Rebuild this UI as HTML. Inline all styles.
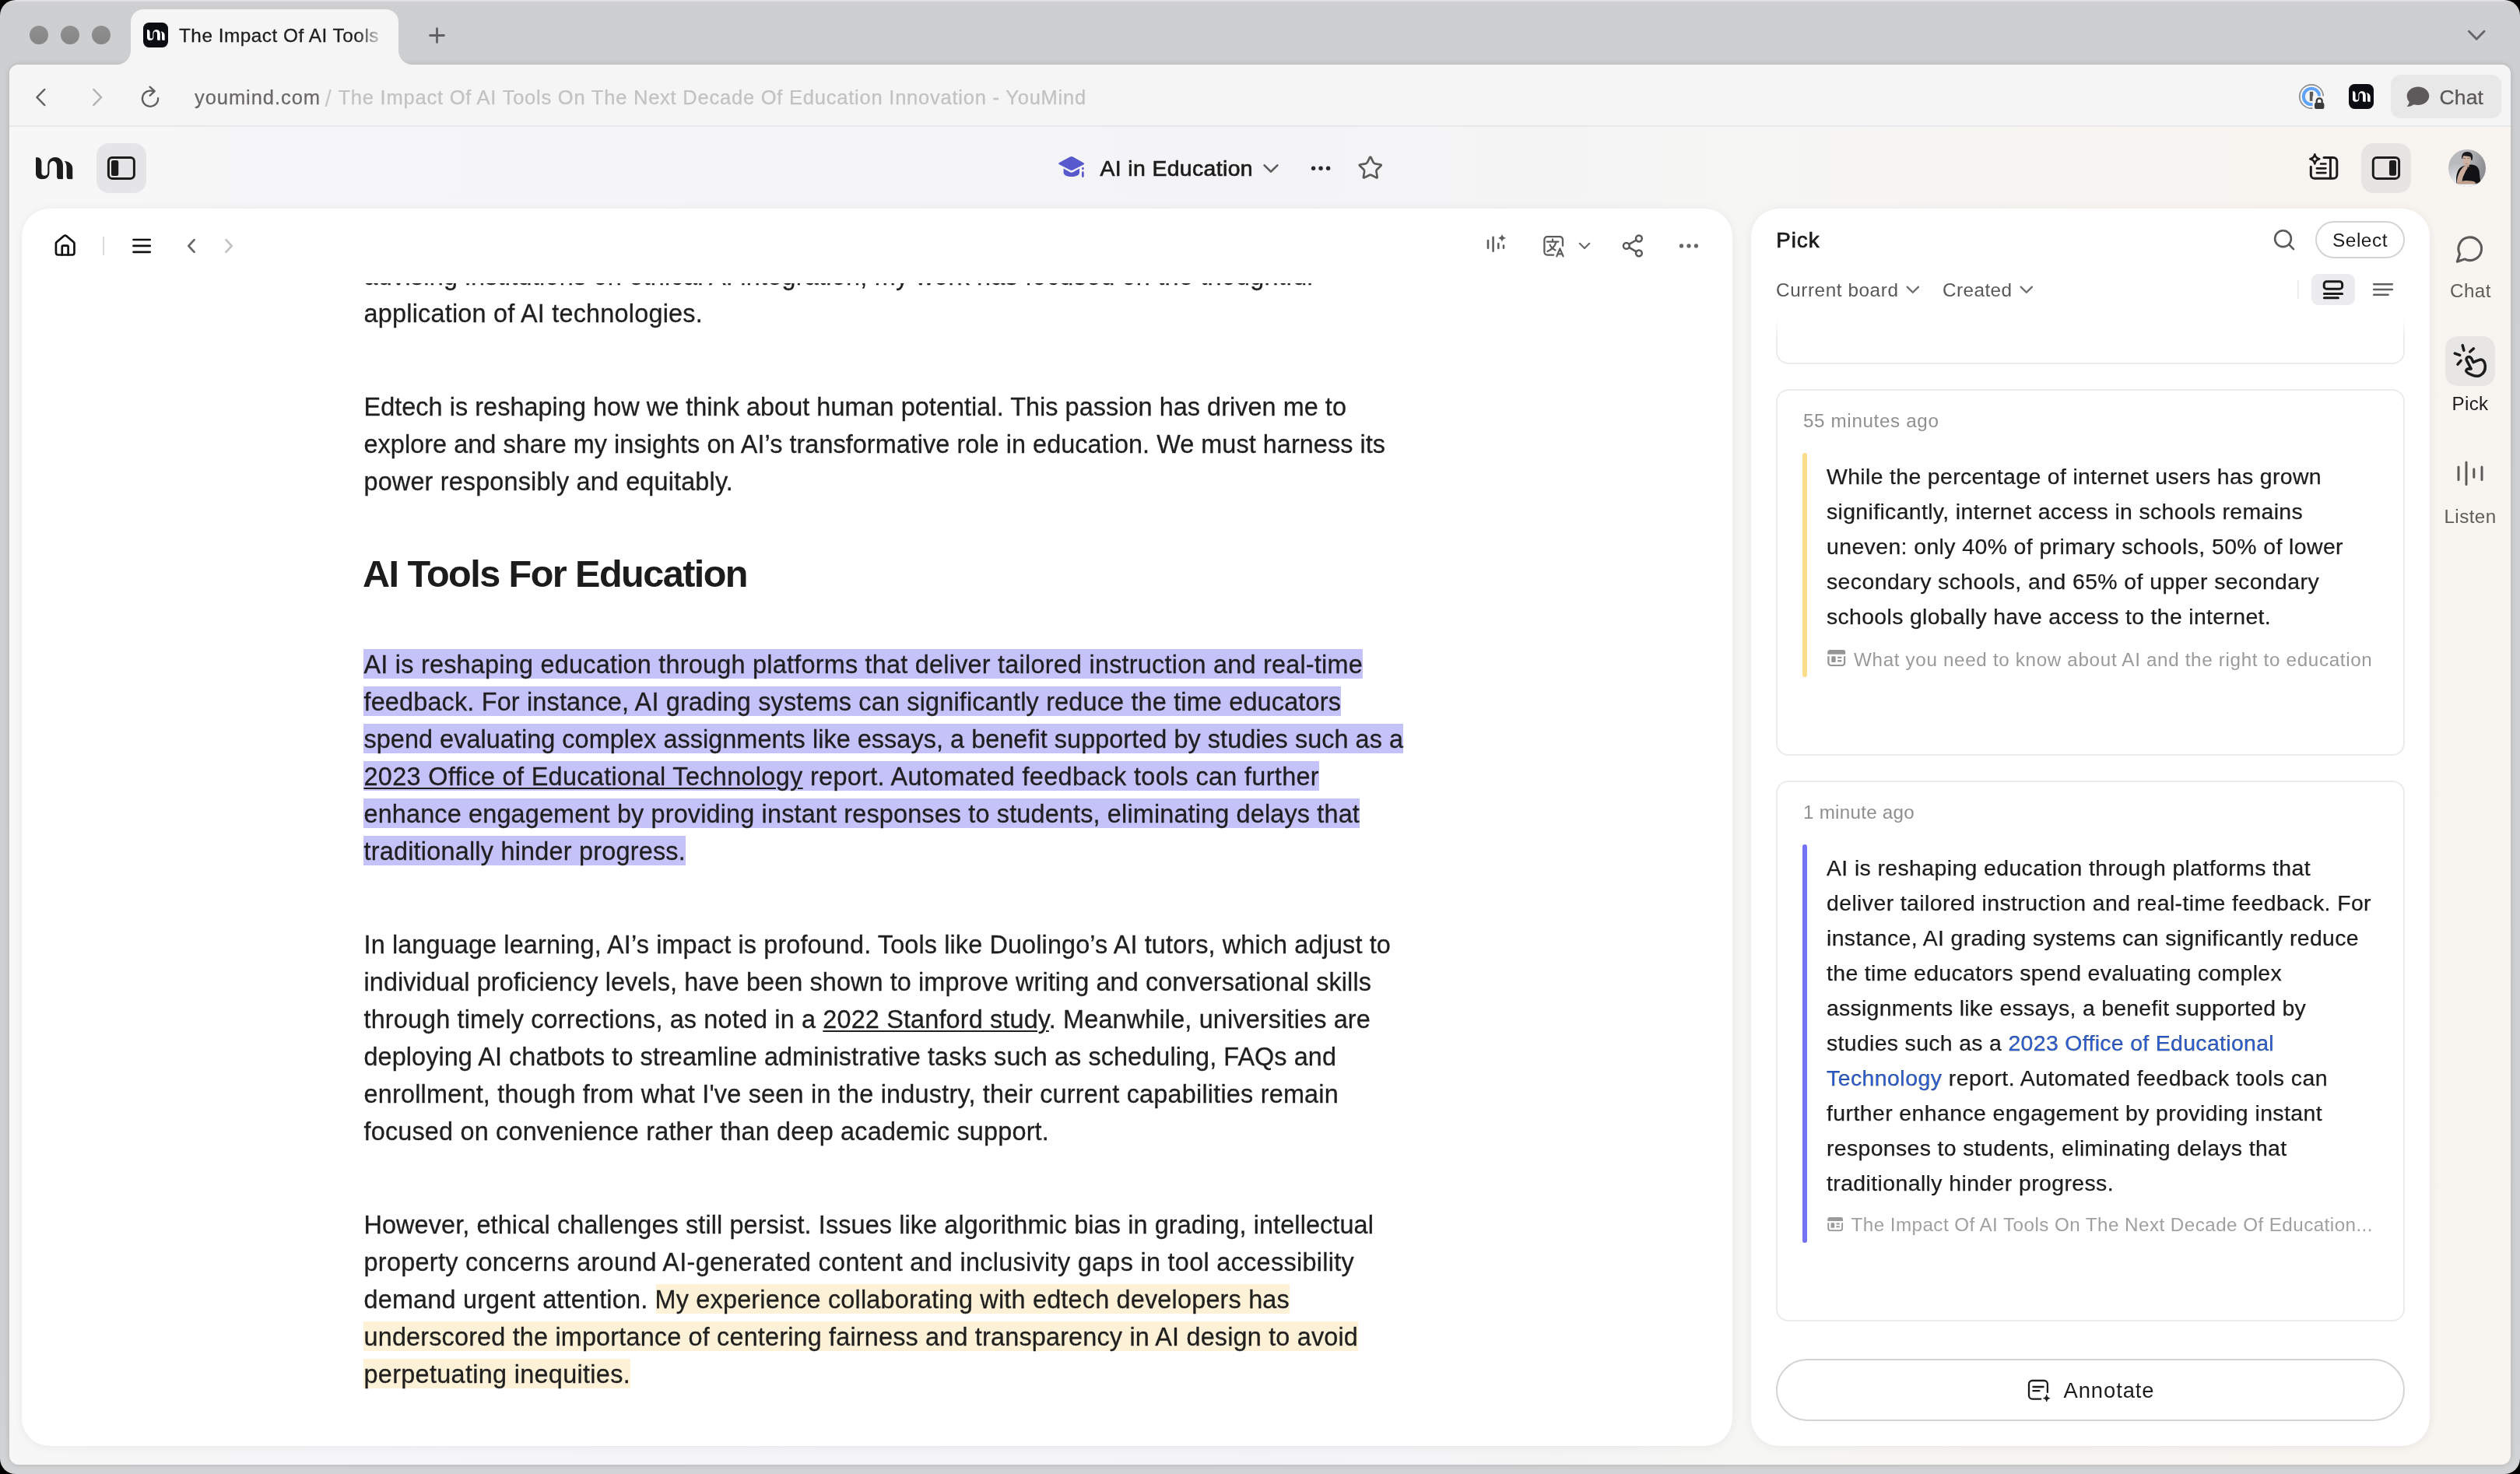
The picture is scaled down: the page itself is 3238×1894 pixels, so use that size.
<!DOCTYPE html>
<html lang="en"><head><meta charset="utf-8"><title>The Impact Of AI Tools On The Next Decade Of Education Innovation - YouMind</title>
<style>
*{box-sizing:border-box;margin:0;padding:0}
html,body{width:3238px;height:1894px;overflow:hidden;background:#000;font-family:"Liberation Sans",sans-serif}
.abs,.t,svg.i{position:absolute}
.t{white-space:nowrap;font-kerning:normal}
svg.i{overflow:visible}
.win{will-change:transform;position:absolute;left:0;top:0;width:3238px;height:1894px;border-radius:20px;overflow:hidden;
 background:linear-gradient(180deg,#e6e6e7 0,#dfdfe0 1.2px,#d0d1d3 2.6px,#cdced0 7px,#cecfd1 50px,#cfd0d2 94%,#d2d3d4 100%)}
.tl{position:absolute;top:33px;width:24px;height:24px;border-radius:50%;background:linear-gradient(180deg,#8f8f90,#868687)}
.tab{position:absolute;left:168px;top:12px;width:344px;height:72px;background:#f5f5f5;border-radius:16px 16px 0 0}
.flare{position:absolute;top:65px;width:18px;height:18px}
.inner{position:absolute;left:12px;top:83px;width:3214px;height:1799px;border-radius:12px;overflow:hidden;
 box-shadow:0 0 7px 0 rgba(0,0,0,.15);
 background:linear-gradient(90deg,#f7f7f8 0%,#f6f6f8 12%,#f5f4f7 30%,#f4f3f6 50%,#f5f4f5 62%,#f6f6f4 69%,#f7f4f1 85%,#f8f4f0 100%)}
.tbar{position:absolute;left:0;top:0;width:3214px;height:80px;background:#f5f5f5;border-bottom:2px solid #e9e9eb}
.card{position:absolute;background:#fff;border-radius:36px;box-shadow:0 0 14px rgba(0,0,0,.045),0 4px 14px rgba(40,40,60,.025)}
.hl{position:absolute;height:38px}
.hp{background:#c4c2f9}
.hy{background:#fdf2d7}
.pc{position:absolute;left:2282px;width:808px;border:2px solid #ebebee;border-radius:16px;background:#fff}
.bar{position:absolute;left:2316px;width:6px;border-radius:3px}
.clipA{position:absolute;left:0;top:0;width:3238px;height:1894px;clip-path:inset(364px 1012px 36px 28px)}
.clipP{position:absolute;left:0;top:0;width:3238px;height:1894px;clip-path:inset(403px 116px 36px 2250px)}
</style></head>
<body>
<div class="win">
  <div class="tl" style="left:38px"></div><div class="tl" style="left:78px"></div><div class="tl" style="left:118px"></div>
  <div class="inner">
    <div class="tbar"></div>
  </div>
  <div class="tab"></div>
  <div class="flare" style="left:150px;background:radial-gradient(circle at 0 0,rgba(245,245,245,0) 17.5px,#f5f5f5 18.5px)"></div>
  <div class="flare" style="left:512px;background:radial-gradient(circle at 100% 0,rgba(245,245,245,0) 17.5px,#f5f5f5 18.5px)"></div>
  <svg width="0" height="0" style="position:absolute"><defs>
<symbol id="um" viewBox="0 0 663 395"><path d="M0,3 L40,3 C80,10 103,45 103,95 L103,280 C103,315 125,330 155,330 C190,330 213,310 213,270 L213,140 C213,60 270,0 350,0 C430,0 488,60 488,150 L488,395 L430,395 C395,395 378,375 378,340 L378,160 C378,105 350,70 310,70 C270,70 243,105 243,160 L243,280 C243,350 190,395 120,395 C50,395 0,360 0,290 Z"/><path d="M508,70 C600,70 663,130 663,220 L663,395 L605,395 C570,395 553,375 553,340 L553,190 C553,130 540,95 508,70 Z"/></symbol>
<symbol id="src" viewBox="0 0 24 22"><path d="M0,6 V3.5 A3.5,3.5 0 0 1 3.5,0 H20.5 A3.5,3.5 0 0 1 24,3.5 V6 Z" fill="currentColor"/><path d="M1.2,8.6 V17.3 A3.5,3.5 0 0 0 4.7,20.8 H19.3 A3.5,3.5 0 0 0 22.8,17.3 V8.6" fill="none" stroke="currentColor" stroke-width="2.4"/><rect x="5.2" y="8.6" width="5.6" height="8" rx="0.8" fill="currentColor"/><path d="M14.4,10.2 H17.8 M14.4,14.8 H17.8" stroke="currentColor" stroke-width="2.4" stroke-linecap="round"/></symbol>
</defs></svg>
<!-- favicon -->
<div class="abs" style="left:184px;top:29px;width:32px;height:32px;border-radius:7.5px;background:#0c0d13"></div>
<svg class="i" style="left:188.6px;top:38px" width="22.8" height="14" fill="#fff"><use href="#um" width="22.8" height="14"/></svg>
<!-- plus -->
<svg class="i" style="left:545px;top:29px" width="32" height="32" viewBox="0 0 32 32" fill="none" stroke="#5f5f61" stroke-width="2.8" stroke-linecap="round"><path d="M7.6,16.5 H25.4 M16.5,7.6 V25.4"/></svg>
<!-- tabs chevron -->
<svg class="i" style="left:3166px;top:33px" width="32" height="24" viewBox="0 0 32 24" fill="none" stroke="#66666a" stroke-width="2.9" stroke-linecap="round" stroke-linejoin="round"><path d="M6.4,7.3 L16.2,17.3 L26,7.3"/></svg>

  <!-- cards -->
  <div class="card" style="left:28px;top:268px;width:2198px;height:1590px"></div>
  <div class="card" style="left:2250px;top:268px;width:872px;height:1590px"></div>

  <!-- header buttons -->
  <div class="abs" style="left:124px;top:184px;width:64px;height:64px;border-radius:16px;background:#e5e5e7"></div>
  <div class="abs" style="left:3034px;top:184px;width:64px;height:64px;border-radius:16px;background:#e7e4e3"></div>
  <div class="abs" style="left:3072px;top:96px;width:142px;height:56px;border-radius:13px;background:#e9e8e9"></div>
  <div class="abs" style="left:3142px;top:432px;width:64px;height:64px;border-radius:16px;background:#e8e6e5"></div>
  <!-- pick header -->
  <div class="abs" style="left:2975px;top:284px;width:115px;height:48px;border-radius:24px;border:2px solid #d3d4d8"></div>
  <div class="abs" style="left:2970px;top:352px;width:56px;height:40px;border-radius:9px;background:#ececee"></div>
  <div class="abs" style="left:2952px;top:360px;width:2px;height:24px;background:#ebebee"></div>
  <div class="abs" style="left:132px;top:304px;width:2px;height:24px;background:#dddde0"></div>

  <!-- article -->
  <div class="clipA">
    <div class="hl hp" style="left:467px;top:834px;width:1284px"></div>
    <div class="hl hp" style="left:467px;top:882px;width:1256px"></div>
    <div class="hl hp" style="left:467px;top:930px;width:1336px"></div>
    <div class="hl hp" style="left:467px;top:978px;width:1228px"></div>
    <div class="hl hp" style="left:467px;top:1026px;width:1280px"></div>
    <div class="hl hp" style="left:467px;top:1074px;width:414px"></div>
    <div class="hl hy" style="left:843px;top:1650px;width:814px"></div>
    <div class="hl hy" style="left:467px;top:1698px;width:1278px"></div>
    <div class="hl hy" style="left:467px;top:1746px;width:343px"></div>
<div class="t" style="left:467.50px;top:330.61px;font-size:32.4px;line-height:49px;color:#1f1f1f;letter-spacing:0.236px;-webkit-text-stroke:0.3px #1f1f1f;">advising institutions on ethical AI integration, my work has focused on the thoughtful</div>
<div class="t" style="left:467.50px;top:378.61px;font-size:32.4px;line-height:49px;color:#1f1f1f;letter-spacing:0.223px;-webkit-text-stroke:0.3px #1f1f1f;">application of AI technologies.</div>
<div class="t" style="left:467.50px;top:498.92px;font-size:32.4px;line-height:49px;color:#1f1f1f;letter-spacing:0.053px;-webkit-text-stroke:0.3px #1f1f1f;">Edtech is reshaping how we think about human potential. This passion has driven me to</div>
<div class="t" style="left:467.50px;top:546.92px;font-size:32.4px;line-height:49px;color:#1f1f1f;letter-spacing:0.053px;-webkit-text-stroke:0.3px #1f1f1f;">explore and share my insights on AI’s transformative role in education. We must harness its</div>
<div class="t" style="left:467.50px;top:594.92px;font-size:32.4px;line-height:49px;color:#1f1f1f;letter-spacing:0.161px;-webkit-text-stroke:0.3px #1f1f1f;">power responsibly and equitably.</div>
<div class="t" style="left:466.00px;top:701.00px;font-size:48.6px;line-height:73px;color:#1c1c1c;font-weight:700;letter-spacing:-1.556px;">AI Tools For Education</div>
<div class="t" style="left:467.50px;top:830.01px;font-size:32.4px;line-height:49px;color:#1f1f1f;letter-spacing:0.235px;-webkit-text-stroke:0.3px #1f1f1f;">AI is reshaping education through platforms that deliver tailored instruction and real-time</div>
<div class="t" style="left:467.50px;top:878.01px;font-size:32.4px;line-height:49px;color:#1f1f1f;letter-spacing:0.175px;-webkit-text-stroke:0.3px #1f1f1f;">feedback. For instance, AI grading systems can significantly reduce the time educators</div>
<div class="t" style="left:467.50px;top:926.01px;font-size:32.4px;line-height:49px;color:#1f1f1f;letter-spacing:0.055px;-webkit-text-stroke:0.3px #1f1f1f;">spend evaluating complex assignments like essays, a benefit supported by studies such as a</div>
<div class="t" style="left:467.50px;top:974.01px;font-size:32.4px;line-height:49px;color:#1f1f1f;letter-spacing:0.337px;-webkit-text-stroke:0.3px #1f1f1f;"><span style="text-decoration:underline;text-decoration-thickness:2.4px;text-underline-offset:2.6px;text-decoration-skip-ink:auto;">2023 Office of Educational Technology</span> report. Automated feedback tools can further</div>
<div class="t" style="left:467.50px;top:1022.01px;font-size:32.4px;line-height:49px;color:#1f1f1f;letter-spacing:0.159px;-webkit-text-stroke:0.3px #1f1f1f;">enhance engagement by providing instant responses to students, eliminating delays that</div>
<div class="t" style="left:467.50px;top:1070.01px;font-size:32.4px;line-height:49px;color:#1f1f1f;letter-spacing:0.220px;-webkit-text-stroke:0.3px #1f1f1f;">traditionally hinder progress.</div>
<div class="t" style="left:467.50px;top:1190.01px;font-size:32.4px;line-height:49px;color:#1f1f1f;letter-spacing:0.129px;-webkit-text-stroke:0.3px #1f1f1f;">In language learning, AI’s impact is profound. Tools like Duolingo’s AI tutors, which adjust to</div>
<div class="t" style="left:467.50px;top:1238.01px;font-size:32.4px;line-height:49px;color:#1f1f1f;letter-spacing:0.099px;-webkit-text-stroke:0.3px #1f1f1f;">individual proficiency levels, have been shown to improve writing and conversational skills</div>
<div class="t" style="left:467.50px;top:1286.01px;font-size:32.4px;line-height:49px;color:#1f1f1f;letter-spacing:0.155px;-webkit-text-stroke:0.3px #1f1f1f;">through timely corrections, as noted in a <span style="text-decoration:underline;text-decoration-thickness:2.4px;text-underline-offset:2.6px;text-decoration-skip-ink:auto;">2022 Stanford study</span>. Meanwhile, universities are</div>
<div class="t" style="left:467.50px;top:1334.01px;font-size:32.4px;line-height:49px;color:#1f1f1f;letter-spacing:0.085px;-webkit-text-stroke:0.3px #1f1f1f;">deploying AI chatbots to streamline administrative tasks such as scheduling, FAQs and</div>
<div class="t" style="left:467.50px;top:1382.01px;font-size:32.4px;line-height:49px;color:#1f1f1f;letter-spacing:0.214px;-webkit-text-stroke:0.3px #1f1f1f;">enrollment, though from what I've seen in the industry, their current capabilities remain</div>
<div class="t" style="left:467.50px;top:1430.01px;font-size:32.4px;line-height:49px;color:#1f1f1f;letter-spacing:0.189px;-webkit-text-stroke:0.3px #1f1f1f;">focused on convenience rather than deep academic support.</div>
<div class="t" style="left:467.50px;top:1550.01px;font-size:32.4px;line-height:49px;color:#1f1f1f;letter-spacing:0.107px;-webkit-text-stroke:0.3px #1f1f1f;">However, ethical challenges still persist. Issues like algorithmic bias in grading, intellectual</div>
<div class="t" style="left:467.50px;top:1598.01px;font-size:32.4px;line-height:49px;color:#1f1f1f;letter-spacing:0.302px;-webkit-text-stroke:0.3px #1f1f1f;">property concerns around AI-generated content and inclusivity gaps in tool accessibility</div>
<div class="t" style="left:467.50px;top:1646.01px;font-size:32.4px;line-height:49px;color:#1f1f1f;letter-spacing:0.196px;-webkit-text-stroke:0.3px #1f1f1f;">demand urgent attention. My experience collaborating with edtech developers has</div>
<div class="t" style="left:467.50px;top:1694.01px;font-size:32.4px;line-height:49px;color:#1f1f1f;letter-spacing:0.176px;-webkit-text-stroke:0.3px #1f1f1f;">underscored the importance of centering fairness and transparency in AI design to avoid</div>
<div class="t" style="left:467.50px;top:1742.01px;font-size:32.4px;line-height:49px;color:#1f1f1f;letter-spacing:0.314px;-webkit-text-stroke:0.3px #1f1f1f;">perpetuating inequities.</div>
  </div>

  <!-- pick list -->
  <div class="clipP">
    <div class="pc" style="top:300px;height:168px"></div>
    <div class="abs" style="left:2270px;top:403px;width:840px;height:32px;background:linear-gradient(180deg,#fff 0,rgba(255,255,255,.9) 30%,rgba(255,255,255,0) 100%)"></div>
    <div class="pc" style="top:500px;height:471px"></div>
    <div class="pc" style="top:1003px;height:695px"></div>
    <div class="bar" style="top:582px;height:288px;background:#fbdc8a"></div>
    <div class="bar" style="top:1085px;height:512px;background:#7571f3"></div>
<div class="t" style="left:2317.00px;top:522.81px;font-size:24.2px;line-height:36px;color:#8f8f8f;letter-spacing:0.650px;">55 minutes ago</div>
<div class="t" style="left:2347.00px;top:590.91px;font-size:28.4px;line-height:43px;color:#1c1c1c;letter-spacing:0.362px;-webkit-text-stroke:0.25px #1c1c1c;">While the percentage of internet users has grown</div>
<div class="t" style="left:2347.00px;top:635.91px;font-size:28.4px;line-height:43px;color:#1c1c1c;letter-spacing:0.360px;-webkit-text-stroke:0.25px #1c1c1c;">significantly, internet access in schools remains</div>
<div class="t" style="left:2347.00px;top:680.91px;font-size:28.4px;line-height:43px;color:#1c1c1c;letter-spacing:0.411px;-webkit-text-stroke:0.25px #1c1c1c;">uneven: only 40% of primary schools, 50% of lower</div>
<div class="t" style="left:2347.00px;top:725.91px;font-size:28.4px;line-height:43px;color:#1c1c1c;letter-spacing:0.424px;-webkit-text-stroke:0.25px #1c1c1c;">secondary schools, and 65% of upper secondary</div>
<div class="t" style="left:2347.00px;top:770.91px;font-size:28.4px;line-height:43px;color:#1c1c1c;letter-spacing:0.344px;-webkit-text-stroke:0.25px #1c1c1c;">schools globally have access to the internet.</div>
<div class="t" style="left:2382.00px;top:829.51px;font-size:24.2px;line-height:36px;color:#9a9a9a;letter-spacing:0.676px;">What you need to know about AI and the right to education</div>
<div class="t" style="left:2317.00px;top:1025.81px;font-size:24.2px;line-height:36px;color:#8f8f8f;letter-spacing:0.262px;">1 minute ago</div>
<div class="t" style="left:2347.00px;top:1093.70px;font-size:28.4px;line-height:43px;color:#1c1c1c;letter-spacing:0.398px;-webkit-text-stroke:0.25px #1c1c1c;">AI is reshaping education through platforms that</div>
<div class="t" style="left:2347.00px;top:1138.70px;font-size:28.4px;line-height:43px;color:#1c1c1c;letter-spacing:0.411px;-webkit-text-stroke:0.25px #1c1c1c;">deliver tailored instruction and real-time feedback. For</div>
<div class="t" style="left:2347.00px;top:1183.70px;font-size:28.4px;line-height:43px;color:#1c1c1c;letter-spacing:0.370px;-webkit-text-stroke:0.25px #1c1c1c;">instance, AI grading systems can significantly reduce</div>
<div class="t" style="left:2347.00px;top:1228.70px;font-size:28.4px;line-height:43px;color:#1c1c1c;letter-spacing:0.355px;-webkit-text-stroke:0.25px #1c1c1c;">the time educators spend evaluating complex</div>
<div class="t" style="left:2347.00px;top:1273.70px;font-size:28.4px;line-height:43px;color:#1c1c1c;letter-spacing:0.280px;-webkit-text-stroke:0.25px #1c1c1c;">assignments like essays, a benefit supported by</div>
<div class="t" style="left:2347.00px;top:1318.70px;font-size:28.4px;line-height:43px;color:#1c1c1c;letter-spacing:0.346px;-webkit-text-stroke:0.25px #1c1c1c;">studies such as a <span style="color:#2a5fd7;">2023 Office of Educational</span></div>
<div class="t" style="left:2347.00px;top:1363.70px;font-size:28.4px;line-height:43px;color:#1c1c1c;letter-spacing:0.471px;-webkit-text-stroke:0.25px #1c1c1c;"><span style="color:#2a5fd7;">Technology</span> report. Automated feedback tools can</div>
<div class="t" style="left:2347.00px;top:1408.70px;font-size:28.4px;line-height:43px;color:#1c1c1c;letter-spacing:0.423px;-webkit-text-stroke:0.25px #1c1c1c;">further enhance engagement by providing instant</div>
<div class="t" style="left:2347.00px;top:1453.70px;font-size:28.4px;line-height:43px;color:#1c1c1c;letter-spacing:0.371px;-webkit-text-stroke:0.25px #1c1c1c;">responses to students, eliminating delays that</div>
<div class="t" style="left:2347.00px;top:1498.70px;font-size:28.4px;line-height:43px;color:#1c1c1c;letter-spacing:0.411px;-webkit-text-stroke:0.25px #1c1c1c;">traditionally hinder progress.</div>
<div class="t" style="left:2378.50px;top:1556.01px;font-size:24.2px;line-height:36px;color:#a0a0a0;letter-spacing:0.457px;">The Impact Of AI Tools On The Next Decade Of Education...</div>
    <svg class="i" style="left:2348.1px;top:835.3px;color:#969696" width="23.6" height="21.2"><use href="#src" width="23.6" height="21.2"/></svg>
<svg class="i" style="left:2348.1px;top:1563.8px;color:#9a9a9a" width="20.4" height="18.3"><use href="#src" width="20.4" height="18.3"/></svg>

  </div>
  <div class="abs" style="left:2282px;top:1746px;width:808px;height:80px;border-radius:40px;border:2px solid #d3d4d8;background:#fff"></div>

<div class="t" style="left:230.00px;top:28.31px;font-size:24.3px;line-height:36px;color:#1d1d1f;letter-spacing:0.530px;-webkit-text-stroke:0.3px #1d1d1f;-webkit-mask-image:linear-gradient(90deg,#000 0,#000 228px,rgba(0,0,0,.25) 256px);mask-image:linear-gradient(90deg,#000 0,#000 228px,rgba(0,0,0,.25) 256px);">The Impact Of AI Tools</div>
<div class="t" style="left:250.00px;top:106.01px;font-size:25.5px;line-height:38px;color:#6b6768;letter-spacing:0.940px;-webkit-text-stroke:0.25px #6b6768;">youmind.com</div>
<div class="t" style="left:417.50px;top:103.50px;font-size:30px;line-height:45px;color:#c8c6c7;">/</div>
<div class="t" style="left:434.50px;top:106.01px;font-size:25.5px;line-height:38px;color:#c3c1c2;letter-spacing:0.774px;-webkit-text-stroke:0.25px #c3c1c2;">The Impact Of AI Tools On The Next Decade Of Education Innovation - YouMind</div>
<div class="t" style="left:3134.50px;top:104.70px;font-size:26.5px;line-height:40px;color:#5a5658;letter-spacing:0.129px;-webkit-text-stroke:0.25px #5a5658;">Chat</div>
<div class="t" style="left:1413.50px;top:194.50px;font-size:28.4px;line-height:43px;color:#1c1c1c;letter-spacing:0.368px;-webkit-text-stroke:0.7px #1c1c1c;">AI in Education</div>
<div class="t" style="left:2282.30px;top:287.81px;font-size:27.8px;line-height:42px;color:#1c1c1c;letter-spacing:0.921px;-webkit-text-stroke:0.7px #1c1c1c;">Pick</div>
<div class="t" style="left:2282.00px;top:355.00px;font-size:24.3px;line-height:36px;color:#585858;letter-spacing:0.583px;">Current board</div>
<div class="t" style="left:2496.00px;top:355.00px;font-size:24.3px;line-height:36px;color:#585858;letter-spacing:0.435px;">Created</div>
<div class="t" style="left:2997.00px;top:289.60px;font-size:24.4px;line-height:37px;color:#1c1c1c;letter-spacing:0.534px;">Select</div>
<div class="t" style="left:3148.00px;top:356.41px;font-size:24.2px;line-height:36px;color:#5e5b59;letter-spacing:0.477px;">Chat</div>
<div class="t" style="left:3150.50px;top:501.01px;font-size:24.2px;line-height:36px;color:#1c1c1c;letter-spacing:0.324px;">Pick</div>
<div class="t" style="left:3140.50px;top:645.51px;font-size:24.2px;line-height:36px;color:#5e5b59;letter-spacing:0.409px;">Listen</div>
<div class="t" style="left:2651.50px;top:1765.60px;font-size:27.4px;line-height:41px;color:#1c1c1c;letter-spacing:0.918px;">Annotate</div>
  <!-- nav -->
<svg class="i" style="left:36px;top:105px" width="180" height="44" viewBox="36 105 180 44" fill="none" stroke-width="2.5" stroke-linecap="round" stroke-linejoin="round">
<path d="M57.2,115 L47.4,125 L57.2,135" stroke="#5f5d5f"/>
<path d="M120.3,115 L130.1,125 L120.3,135" stroke="#b2b0b2"/>
<path d="M203.1,126.2 A10.1,10.1 0 1 1 197.6,117.7" stroke="#5f5d5f" stroke-width="2.3"/>
<path d="M192.6,111.6 L198.7,117.2 L192.6,122.8" stroke="#5f5d5f" stroke-width="2.3"/>
</svg>
<!-- 1password -->
<svg class="i" style="left:2952px;top:106px" width="40" height="40" viewBox="2952 106 40 40" fill="none">
<circle cx="2970" cy="124" r="15.2" stroke="#8c8c8c" stroke-width="1.7"/>
<circle cx="2970" cy="124" r="10.2" stroke="#5ea3f9" stroke-width="4"/>
<rect x="2967.8" y="117.8" width="4.4" height="12" fill="#5a5a5a"/>
<rect x="2971.5" y="123.5" width="18" height="19" fill="#f5f5f5"/>
<path d="M2976.7,133 V129.8 A3.5,3.5 0 0 1 2983.7,129.8 V133" stroke="#3b3b3b" stroke-width="2.3"/>
<rect x="2974" y="132" width="12.4" height="8" rx="2" fill="#3b3b3b"/>
</svg>
<!-- ext icon -->
<div class="abs" style="left:3018px;top:108px;width:32px;height:32px;border-radius:7.5px;background:#0c0d13"></div>
<svg class="i" style="left:3022.6px;top:117px" width="22.8" height="14" fill="#fff"><use href="#um" width="22.8" height="14"/></svg>
<!-- chat bubble filled -->
<svg class="i" style="left:3088px;top:108px" width="40" height="34" viewBox="3088 108 40 34"><path d="M3107,111.6 C3115,111.6 3121.3,116.8 3121.3,123.3 C3121.3,129.8 3115,135 3107,135 C3105,135 3103.2,134.7 3101.5,134.2 C3099.5,135.8 3096.5,136.9 3093.6,137 C3093,137 3092.8,136.4 3093.2,136 C3094.6,134.6 3095.5,132.8 3095.7,131 C3093.8,129 3092.7,126.3 3092.7,123.3 C3092.7,116.8 3099,111.6 3107,111.6 Z" fill="#5e5a5b"/></svg>
<!-- app logo -->
<svg class="i" style="left:45.8px;top:201.7px" width="47.5" height="28.4" fill="#1c1c1c"><use href="#um" width="47.5" height="28.4"/></svg>
<!-- sidebar left icon -->
<svg class="i" style="left:136px;top:199px" width="40" height="34" viewBox="136 199 40 34"><rect x="139.4" y="202.4" width="33" height="27" rx="4.6" fill="none" stroke="#1c1c1c" stroke-width="3"/><rect x="143" y="206" width="9.2" height="19.9" rx="2.2" fill="#1c1c1c"/></svg>
<!-- grad cap -->
<svg class="i" style="left:1358px;top:199px" width="38" height="32" viewBox="1358 199 38 32" fill="#5759cc"><path d="M1376.8,201 C1377.4,201 1378,201.2 1378.6,201.5 L1392.3,209.2 C1393.4,209.8 1393.4,211 1392.3,211.6 L1378.6,218.6 C1377.5,219.2 1376.1,219.2 1375,218.6 L1361,211.3 C1359.9,210.7 1359.9,209.5 1361,208.9 L1375,201.5 C1375.6,201.2 1376.2,201 1376.8,201 Z"/><path d="M1366.6,216.6 L1375,221.3 C1376.1,221.9 1377.5,221.9 1378.6,221.3 L1387,216.6 V222 C1387,225 1382,227 1376.8,227 C1371.6,227 1366.6,225 1366.6,222 Z"/><rect x="1390" y="220.2" width="2.7" height="7.7" rx="1.3"/><rect x="1390" y="214.9" width="2.7" height="3.2" rx="1"/></svg>
<!-- chevron / dots / star -->
<svg class="i" style="left:1620px;top:205px" width="26" height="22" viewBox="1620 205 26 22" fill="none" stroke="#5a5a5a" stroke-width="2.6" stroke-linecap="round" stroke-linejoin="round"><path d="M1624.6,212.3 L1633,220.7 L1641.4,212.3"/></svg>
<svg class="i" style="left:1682px;top:210px" width="30" height="12" viewBox="1682 210 30 12" fill="#2a2a2a"><circle cx="1687.6" cy="216.2" r="2.7"/><circle cx="1697.1" cy="216.2" r="2.7"/><circle cx="1706.6" cy="216.2" r="2.7"/></svg>
<svg class="i" style="left:1744.2px;top:199.4px" width="33.6" height="33.6" viewBox="0 0 24 24" fill="none" stroke="#5a5a5a" stroke-width="1.9" stroke-linecap="round" stroke-linejoin="round"><path d="M11.525 2.295a.53.53 0 0 1 .95 0l2.31 4.679a2.123 2.123 0 0 0 1.595 1.16l5.166.756a.53.53 0 0 1 .294.904l-3.736 3.638a2.123 2.123 0 0 0-.611 1.878l.882 5.14a.53.53 0 0 1-.771.56l-4.618-2.428a2.122 2.122 0 0 0-1.973 0L6.396 21.01a.53.53 0 0 1-.77-.56l.881-5.139a2.122 2.122 0 0 0-.611-1.879L2.16 9.795a.53.53 0 0 1 .294-.906l5.165-.755a2.122 2.122 0 0 0 1.597-1.16z"/></svg>
<!-- newspaper sparkle -->
<svg class="i" style="left:2962px;top:193px" width="46" height="42" viewBox="2962 193 46 42" fill="none" stroke="#1c1c1c" stroke-width="3" stroke-linecap="round" stroke-linejoin="round">
<path d="M2986,202.5 H2998.2 A4.6,4.6 0 0 1 3002.8,207.1 V224.7 A4.6,4.6 0 0 1 2998.2,229.3 H2973.9 A4.6,4.6 0 0 1 2969.3,224.7 V214.3"/>
<path d="M2994.4,203 V229"/>
<path d="M2982,210.5 H2988.4 M2976.9,216.3 H2988.4 M2976.9,222.1 H2988.4" stroke-width="2.7"/>
<path d="M2974.3,198.2 C2974.9,201.6 2976.6,203.4 2980.3,204.3 C2976.6,205.2 2974.9,207 2974.3,210.4 C2973.7,207 2972,205.2 2968.3,204.3 C2972,203.4 2973.7,201.6 2974.3,198.2 Z" stroke-width="2.6"/>
</svg>
<!-- sidebar right icon -->
<svg class="i" style="left:3046px;top:199px" width="40" height="34" viewBox="3046 199 40 34"><rect x="3049.3" y="202.4" width="33.3" height="27" rx="4.6" fill="none" stroke="#1c1c1c" stroke-width="3"/><rect x="3070" y="206" width="9" height="19.8" rx="2.2" fill="#1c1c1c"/></svg>
<!-- avatar -->
<svg class="i" style="left:3146px;top:191.8px" width="48" height="48" viewBox="0 0 48 48">
<defs><clipPath id="avc"><circle cx="24" cy="24" r="24"/></clipPath>
<linearGradient id="avg" x1="0" y1="0" x2="1" y2="0.25"><stop offset="0" stop-color="#b6b8bc"/><stop offset="0.45" stop-color="#b9babe"/><stop offset="0.8" stop-color="#a1a2a6"/><stop offset="1" stop-color="#8e9094"/></linearGradient>
<radialGradient id="avl" cx="0.22" cy="0.92" r="0.55"><stop offset="0" stop-color="#eef1f5"/><stop offset="0.45" stop-color="#dfe2e7" stop-opacity=".7"/><stop offset="1" stop-color="#dfe2e7" stop-opacity="0"/></radialGradient></defs>
<g clip-path="url(#avc)"><rect width="48" height="48" fill="url(#avg)"/><rect width="48" height="48" fill="url(#avl)"/>
<path d="M10,38 C10.4,30 13,24 17.5,22 C21,20.4 26,19.4 29.5,19.5 C35,19.8 38.8,22.5 39.6,28 L41.4,43.4 L10.4,43.4 Z" fill="#121214"/>
<path d="M18.3,12 C18.1,8 20.5,6.3 23.6,6.3 C26.8,6.3 29.1,8.5 28.9,12.6 C28.8,15.2 28.2,17.4 26.9,19.4 C25.9,20.9 24.6,21.9 23.3,21.9 C21.9,21.9 20.6,20.6 19.7,18.8 C18.8,16.9 18.4,14.4 18.3,12 Z" fill="#ceb2a4"/><path d="M21.6,20 L26.4,19.6 L26.8,22.6 L21.4,23 Z" fill="#c4a595"/>
<path d="M17.2,11.8 C16.5,6.5 19.5,3.1 24.2,3.1 C28.8,3.1 31.5,6 31.2,10.6 C31.1,12.2 30.8,13.4 30.3,14.2 L29.1,13.8 C29.3,11.6 28.8,10 27.4,8.9 C25.2,9 22,8.8 19.8,8 C18.8,9.1 18.3,10.4 18.2,12.2 Z" fill="#1b1b1e"/>
<path d="M19.4,11.5 H22.1 M24.6,11.3 H27.6" stroke="#5e473e" stroke-width="0.9" opacity=".75"/>
<path d="M22.2,18.4 H24.7" stroke="#ad7a72" stroke-width="1"/>
<path d="M20,21.8 C21.8,20.8 24.3,21.6 24.5,23.6 C24.6,25 23.3,26.2 22.5,27.2 L18.7,35.6 L17.2,41.6 L11,43.4 C10.8,40.6 11.2,36.6 13,32.1 C14.8,27.7 17.4,23.6 20,21.8 Z" fill="#c9ab9b"/>
<path d="M16.5,40.8 C22,39.4 30,40.2 34.6,42 C34.9,43.6 34,45 33,45.6 C27,46 18,45.3 12,44.5 C11.5,43.4 12.5,41.8 16.5,40.8 Z" fill="#bf9f8e"/>
<path d="M0,45 C12,44.2 36,45.8 48,43.4 V48 H0 Z" fill="#f2f4f7"/>
</g></svg>
<!-- main card toolbar left -->
<svg class="i" style="left:68.2px;top:300.1px" width="31.4" height="31.4" viewBox="0 0 24 24" fill="none" stroke="#111" stroke-width="2.05" stroke-linecap="round" stroke-linejoin="round"><path d="M15 21v-8a1 1 0 0 0-1-1h-4a1 1 0 0 0-1 1v8"/><path d="M3 10a2 2 0 0 1 .709-1.528l7-5.999a2 2 0 0 1 2.582 0l7 5.999A2 2 0 0 1 21 10v9a2 2 0 0 1-2 2H5a2 2 0 0 1-2-2z"/></svg>
<svg class="i" style="left:166px;top:302px" width="140" height="28" viewBox="166 302 140 28" fill="none" stroke-width="2.7" stroke-linecap="round" stroke-linejoin="round">
<path d="M171.5,308 H192.7 M171.5,315.9 H192.7 M171.5,323.8 H192.7" stroke="#111"/>
<path d="M249.6,308.2 L242.3,316 L249.6,323.8" stroke="#686868"/>
<path d="M290.4,308.2 L297.7,316 L290.4,323.8" stroke="#c3c3c3"/>
</svg>
<!-- main card toolbar right: audio sparkle -->
<svg class="i" style="left:1906px;top:298px" width="34" height="30" viewBox="1906 298 34 30" fill="none" stroke="#5f5f5f" stroke-width="2.6" stroke-linecap="round">
<path d="M1912,309 V318.7 M1918.6,304.9 V322.8 M1925.3,313.1 V319 M1932,315.6 V318.7"/>
<path d="M1930,300.6 C1930.5,303.7 1931.9,305.2 1935,305.9 C1931.9,306.6 1930.5,308.1 1930,311.2 C1929.5,308.1 1928.1,306.6 1925,305.9 C1928.1,305.2 1929.5,303.7 1930,300.6 Z" fill="#5f5f5f" stroke="none"/>
</svg>
<!-- translate -->
<svg class="i" style="left:1980px;top:300px" width="34" height="34" viewBox="1980 300 34 34" fill="none" stroke="#5c5c5c" stroke-width="2.3" stroke-linecap="round" stroke-linejoin="round">
<path d="M2008,315.8 V308 A3.8,3.8 0 0 0 2004.2,304.2 H1988.2 A3.8,3.8 0 0 0 1984.4,308 V323.8 A3.8,3.8 0 0 0 1988.2,327.6 H1996.2"/>
<path d="M1987.8,310.6 H2002.4 M1995,307.6 V310.4" stroke-width="2.2"/>
<path d="M1999.4,311 C1998.3,316 1994,320.4 1988.4,323" stroke-width="2.2"/>
<path d="M1991.6,314.6 C1993,318 1995.6,320.2 1998.6,321.4" stroke-width="2.2"/>
<path d="M2000.2,329.4 L2004.4,319.4 L2008.6,329.4 M2001.6,326.4 H2007.2" stroke-width="2.2"/>
</svg>
<svg class="i" style="left:2026px;top:308px" width="22" height="16" viewBox="2026 308 22 16" fill="none" stroke="#666" stroke-width="2.2" stroke-linecap="round" stroke-linejoin="round"><path d="M2029.8,312.8 L2036,319 L2042.2,312.8"/></svg>
<!-- share -->
<svg class="i" style="left:2082px;top:299px" width="32" height="34" viewBox="2082 299 32 34" fill="none" stroke="#585858" stroke-width="2.5" stroke-linecap="round">
<circle cx="2105.9" cy="306.5" r="3.9"/><circle cx="2089.8" cy="315.9" r="3.9"/><circle cx="2105.9" cy="325.3" r="3.9"/>
<path d="M2093.2,313.9 L2102.5,308.5 M2093.2,317.9 L2102.5,323.3"/>
</svg>
<svg class="i" style="left:2155px;top:310px" width="30" height="12" viewBox="2155 310 30 12" fill="#666"><circle cx="2160.5" cy="315.9" r="2.6"/><circle cx="2170" cy="315.9" r="2.6"/><circle cx="2179.4" cy="315.9" r="2.6"/></svg>
<!-- pick header: chevrons, search, toggles -->
<svg class="i" style="left:2446px;top:362px" width="170" height="20" viewBox="2446 362 170 20" fill="none" stroke="#6a6a6a" stroke-width="2.2" stroke-linecap="round" stroke-linejoin="round"><path d="M2450.6,368.6 L2457.8,375.8 L2465,368.6"/><path d="M2596.6,368.6 L2603.8,375.8 L2611,368.6"/></svg>
<svg class="i" style="left:2918px;top:292px" width="34" height="34" viewBox="2918 292 34 34" fill="none" stroke="#5a5a5a" stroke-width="2.6" stroke-linecap="round"><circle cx="2933.5" cy="306.7" r="10.4"/><path d="M2941.3,314.4 L2947,320.1"/></svg>
<svg class="i" style="left:2980px;top:356px" width="36" height="32" viewBox="2980 356 36 32" fill="none" stroke="#1a1a1a" stroke-width="3" stroke-linecap="round"><rect x="2986.2" y="361.7" width="23.4" height="9.6" rx="3.4"/><path d="M2986.4,377.4 H3009.6 M2986.4,382.7 H3004.4"/></svg>
<svg class="i" style="left:3044px;top:360px" width="36" height="24" viewBox="3044 360 36 24" fill="none" stroke="#606060" stroke-width="2.6" stroke-linecap="round"><path d="M3050.2,365.3 H3073.8 M3050.2,372 H3073.8 M3050.2,378.7 H3068.5"/></svg>
<!-- rail: chat -->
<svg class="i" style="left:3154.4px;top:300.2px" width="39.5" height="39.5" viewBox="0 0 24 24" fill="none" stroke="#5c5a58" stroke-width="1.85" stroke-linecap="round" stroke-linejoin="round"><path d="M7.9 20A9 9 0 1 0 4 16.1L2 22Z"/></svg>
<!-- rail: pick hand -->
<svg class="i" style="left:3134px;top:425px" width="80" height="80" viewBox="0 0 80 80" fill="none" stroke="#1c1c1c" stroke-width="3.5" stroke-linecap="round" stroke-linejoin="round">
<path d="M30.2,18.8 L31.9,25.3 M44.4,22.9 L39.7,27 M20.3,29.1 L26.7,31.4 M28.1,38.4 L24,43.2"/>
<path d="M35.3,37.6 C34.4,35.2 36.3,33.3 38.4,33.4 C40,33.5 41.1,34.6 41.7,35.8 L44,40.6 C47.2,39.6 50.4,37.3 53.6,36.9 C56.6,36.6 59,40.8 59.3,45 C59.6,50 57.2,55 53,57.3 C50,59 46,58.2 42.3,56.8 C39.4,55.7 36.2,54.6 35,52.3 C34.1,50.3 35.9,49 37.9,48.8 L41.2,49 Z"/>
</svg>
<!-- rail: listen -->
<svg class="i" style="left:3152px;top:588px" width="44" height="40" viewBox="3152 588 44 40" fill="none" stroke="#5c5a58" stroke-width="3" stroke-linecap="round"><path d="M3159,600 V616.5 M3169,594 V622.5 M3178.8,602.8 V613.2 M3189,600 V616.5"/></svg>
<!-- annotate icon -->
<svg class="i" style="left:2602px;top:1769px" width="36" height="36" viewBox="2602 1769 36 36" fill="none" stroke="#1c1c1c" stroke-width="2.3" stroke-linecap="round" stroke-linejoin="round">
<path d="M2630.9,1789 V1778.4 A4.4,4.4 0 0 0 2626.5,1774 H2611.4 A4.4,4.4 0 0 0 2607,1778.4 V1793.2 A4.4,4.4 0 0 0 2611.4,1797.6 H2622.3"/>
<path d="M2612.4,1782 H2625.6 M2612.4,1787.2 H2620.4"/>
<path d="M2629.7,1792.4 C2630.1,1794.9 2631.2,1796.1 2633.8,1796.7 C2631.2,1797.3 2630.1,1798.5 2629.7,1801 C2629.3,1798.5 2628.2,1797.3 2625.6,1796.7 C2628.2,1796.1 2629.3,1794.9 2629.7,1792.4 Z" fill="#1c1c1c" stroke-width="1"/>
</svg>

</div>
</body></html>
